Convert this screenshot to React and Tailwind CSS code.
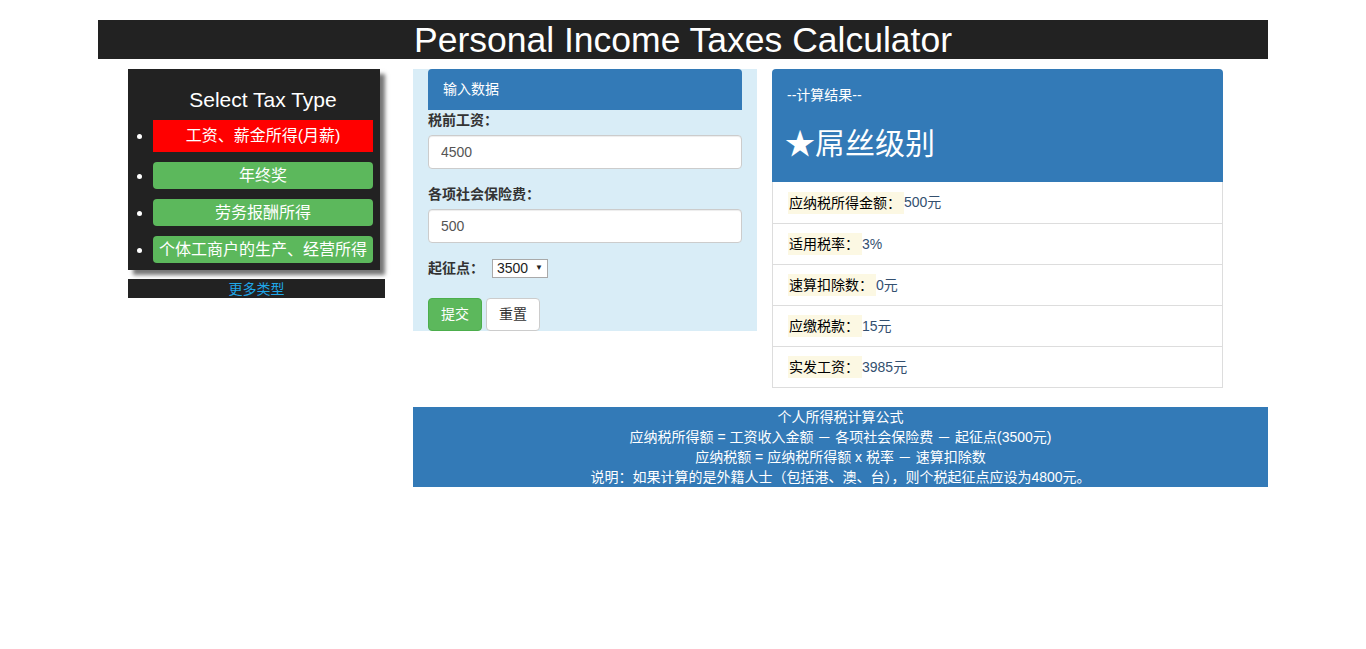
import { useState } from 'react'

const taxTypes = [
  { id: 'salary', label: '工资、薪金所得(月薪)' },
  { id: 'bonus', label: '年终奖' },
  { id: 'service', label: '劳务报酬所得' },
  { id: 'business', label: '个体工商户的生产、经营所得' },
]

const results = [
  { label: '应纳税所得金额：', value: '500元' },
  { label: '适用税率：', value: '3%' },
  { label: '速算扣除数：', value: '0元' },
  { label: '应缴税款：', value: '15元' },
  { label: '实发工资：', value: '3985元' },
]

function TaxTypeMenu({ active, onSelect }) {
  return (
    <div className="w-[257px]">
      <div className="w-[252px] h-[201px] bg-[#222] shadow-[5px_5px_4px_#777]">
        <ul className="list-disc pl-[25px] pr-[7px] pt-[19px] text-white marker:text-white">
          <li className="list-none text-center text-[21px] leading-[24px] mb-[8px]">Select Tax Type</li>
          {taxTypes.map((t) => (
            <li key={t.id} className="mb-[10px]">
              <button onClick={() => onSelect(t.id)}
                className={`block w-[220px] text-center text-[16px] text-white whitespace-nowrap
                  ${active === t.id
                    ? 'bg-[#ff0000] h-[32px] leading-[32px]'
                    : 'bg-[#5cb85c] h-[27px] leading-[27px] rounded-[4px]'}`}>
                {t.label}
              </button>
            </li>
          ))}
        </ul>
      </div>
      <div className="mt-[9px] h-[19px] bg-[#222] text-center text-[14px] leading-[20px]">
        <a href="#" className="text-[#1fa6e8]">更多类型</a>
      </div>
    </div>
  )
}

function InputPanel() {
  return (
    <div className="ml-[28px] w-[344px] h-[262px] bg-[#d9edf7] px-[15px]">
      <div className="h-[41px] bg-[#337ab7] rounded-t-[4px] px-[15px] text-white text-[14px] leading-[41px]">
        输入数据
      </div>
      <label className="block font-bold text-[14px] leading-[20px] text-[#333] mb-[5px]">税前工资：</label>
      <input readOnly value="4500"
        className="block w-full h-[34px] px-[12px] bg-white border border-[#ccc] rounded-[4px] text-[14px] text-[#555] shadow-[inset_0_1px_1px_rgba(0,0,0,0.075)]" />
      <label className="block font-bold text-[14px] leading-[20px] text-[#333] mt-[15px] mb-[5px]">各项社会保险费：</label>
      <input readOnly value="500"
        className="block w-full h-[34px] px-[12px] bg-white border border-[#ccc] rounded-[4px] text-[14px] text-[#555] shadow-[inset_0_1px_1px_rgba(0,0,0,0.075)]" />
      <div className="mt-[15px] flex items-center h-[20px]">
        <span className="font-bold text-[14px] text-[#333]">起征点：</span>
        <div className="ml-[8px] flex items-center h-[19px] w-[56px] bg-white border border-[#a9a9a9] px-[4px] text-[14px] text-[#222]">
          <span>3500</span>
          <span className="ml-auto text-[8px]">▼</span>
        </div>
      </div>
      <div className="mt-[20px] flex gap-[4px]">
        <button className="h-[33px] w-[54px] bg-[#5cb85c] border border-[#4cae4c] rounded-[4px] text-white text-[14px]">提交</button>
        <button className="h-[33px] w-[54px] bg-white border border-[#ccc] rounded-[4px] text-[#333] text-[14px]">重置</button>
      </div>
    </div>
  )
}

function ResultPanel() {
  return (
    <div className="ml-[15px] w-[451px]">
      <div className="h-[113px] bg-[#337ab7] rounded-t-[4px] px-[15px] text-white">
        <div className="pt-[16px] text-[14px] leading-[20px]">--计算结果--</div>
        <div className="mt-[22px] text-[30px] leading-[33px] -ml-[2px]">★屌丝级别</div>
      </div>
      <div className="border-x border-b border-[#ddd]">
        {results.map((r, i) => (
          <div key={r.label}
            className={`h-[41px] px-[15px] flex items-center text-[14px] ${i > 0 ? 'border-t border-[#ddd]' : ''}`}>
            <span className="bg-[#fcf8e3] text-black leading-[22px] pr-[3px] pl-[1px]">{r.label}</span>
            <span className="text-[#34506f]">{r.value}</span>
          </div>
        ))}
      </div>
    </div>
  )
}

export default function App() {
  const [active, setActive] = useState('salary')

  return (
    <div className="min-h-screen bg-white font-['Liberation_Sans','Noto_Sans_CJK_SC',sans-serif]">
      <div className="w-[1170px] mx-auto pt-[20px]">
        <h1 className="h-[39px] bg-[#222] text-white text-center text-[35.5px] leading-[40px]">
          Personal Income Taxes Calculator
        </h1>

        <div className="flex items-start mt-[10px] pl-[30px]">
          <TaxTypeMenu active={active} onSelect={setActive} />
          <InputPanel />
          <ResultPanel />
        </div>

        {/* 计算公式 */}
        <div className="ml-[315px] mt-[19px] w-[855px] bg-[#337ab7] text-white text-center text-[14px] leading-[20px]">
          <p>个人所得税计算公式</p>
          <p>应纳税所得额 = 工资收入金额 － 各项社会保险费 － 起征点(3500元)</p>
          <p>应纳税额 = 应纳税所得额 x 税率 － 速算扣除数</p>
          <p>说明：如果计算的是外籍人士（包括港、澳、台），则个税起征点应设为4800元。</p>
        </div>
      </div>
    </div>
  )
}
